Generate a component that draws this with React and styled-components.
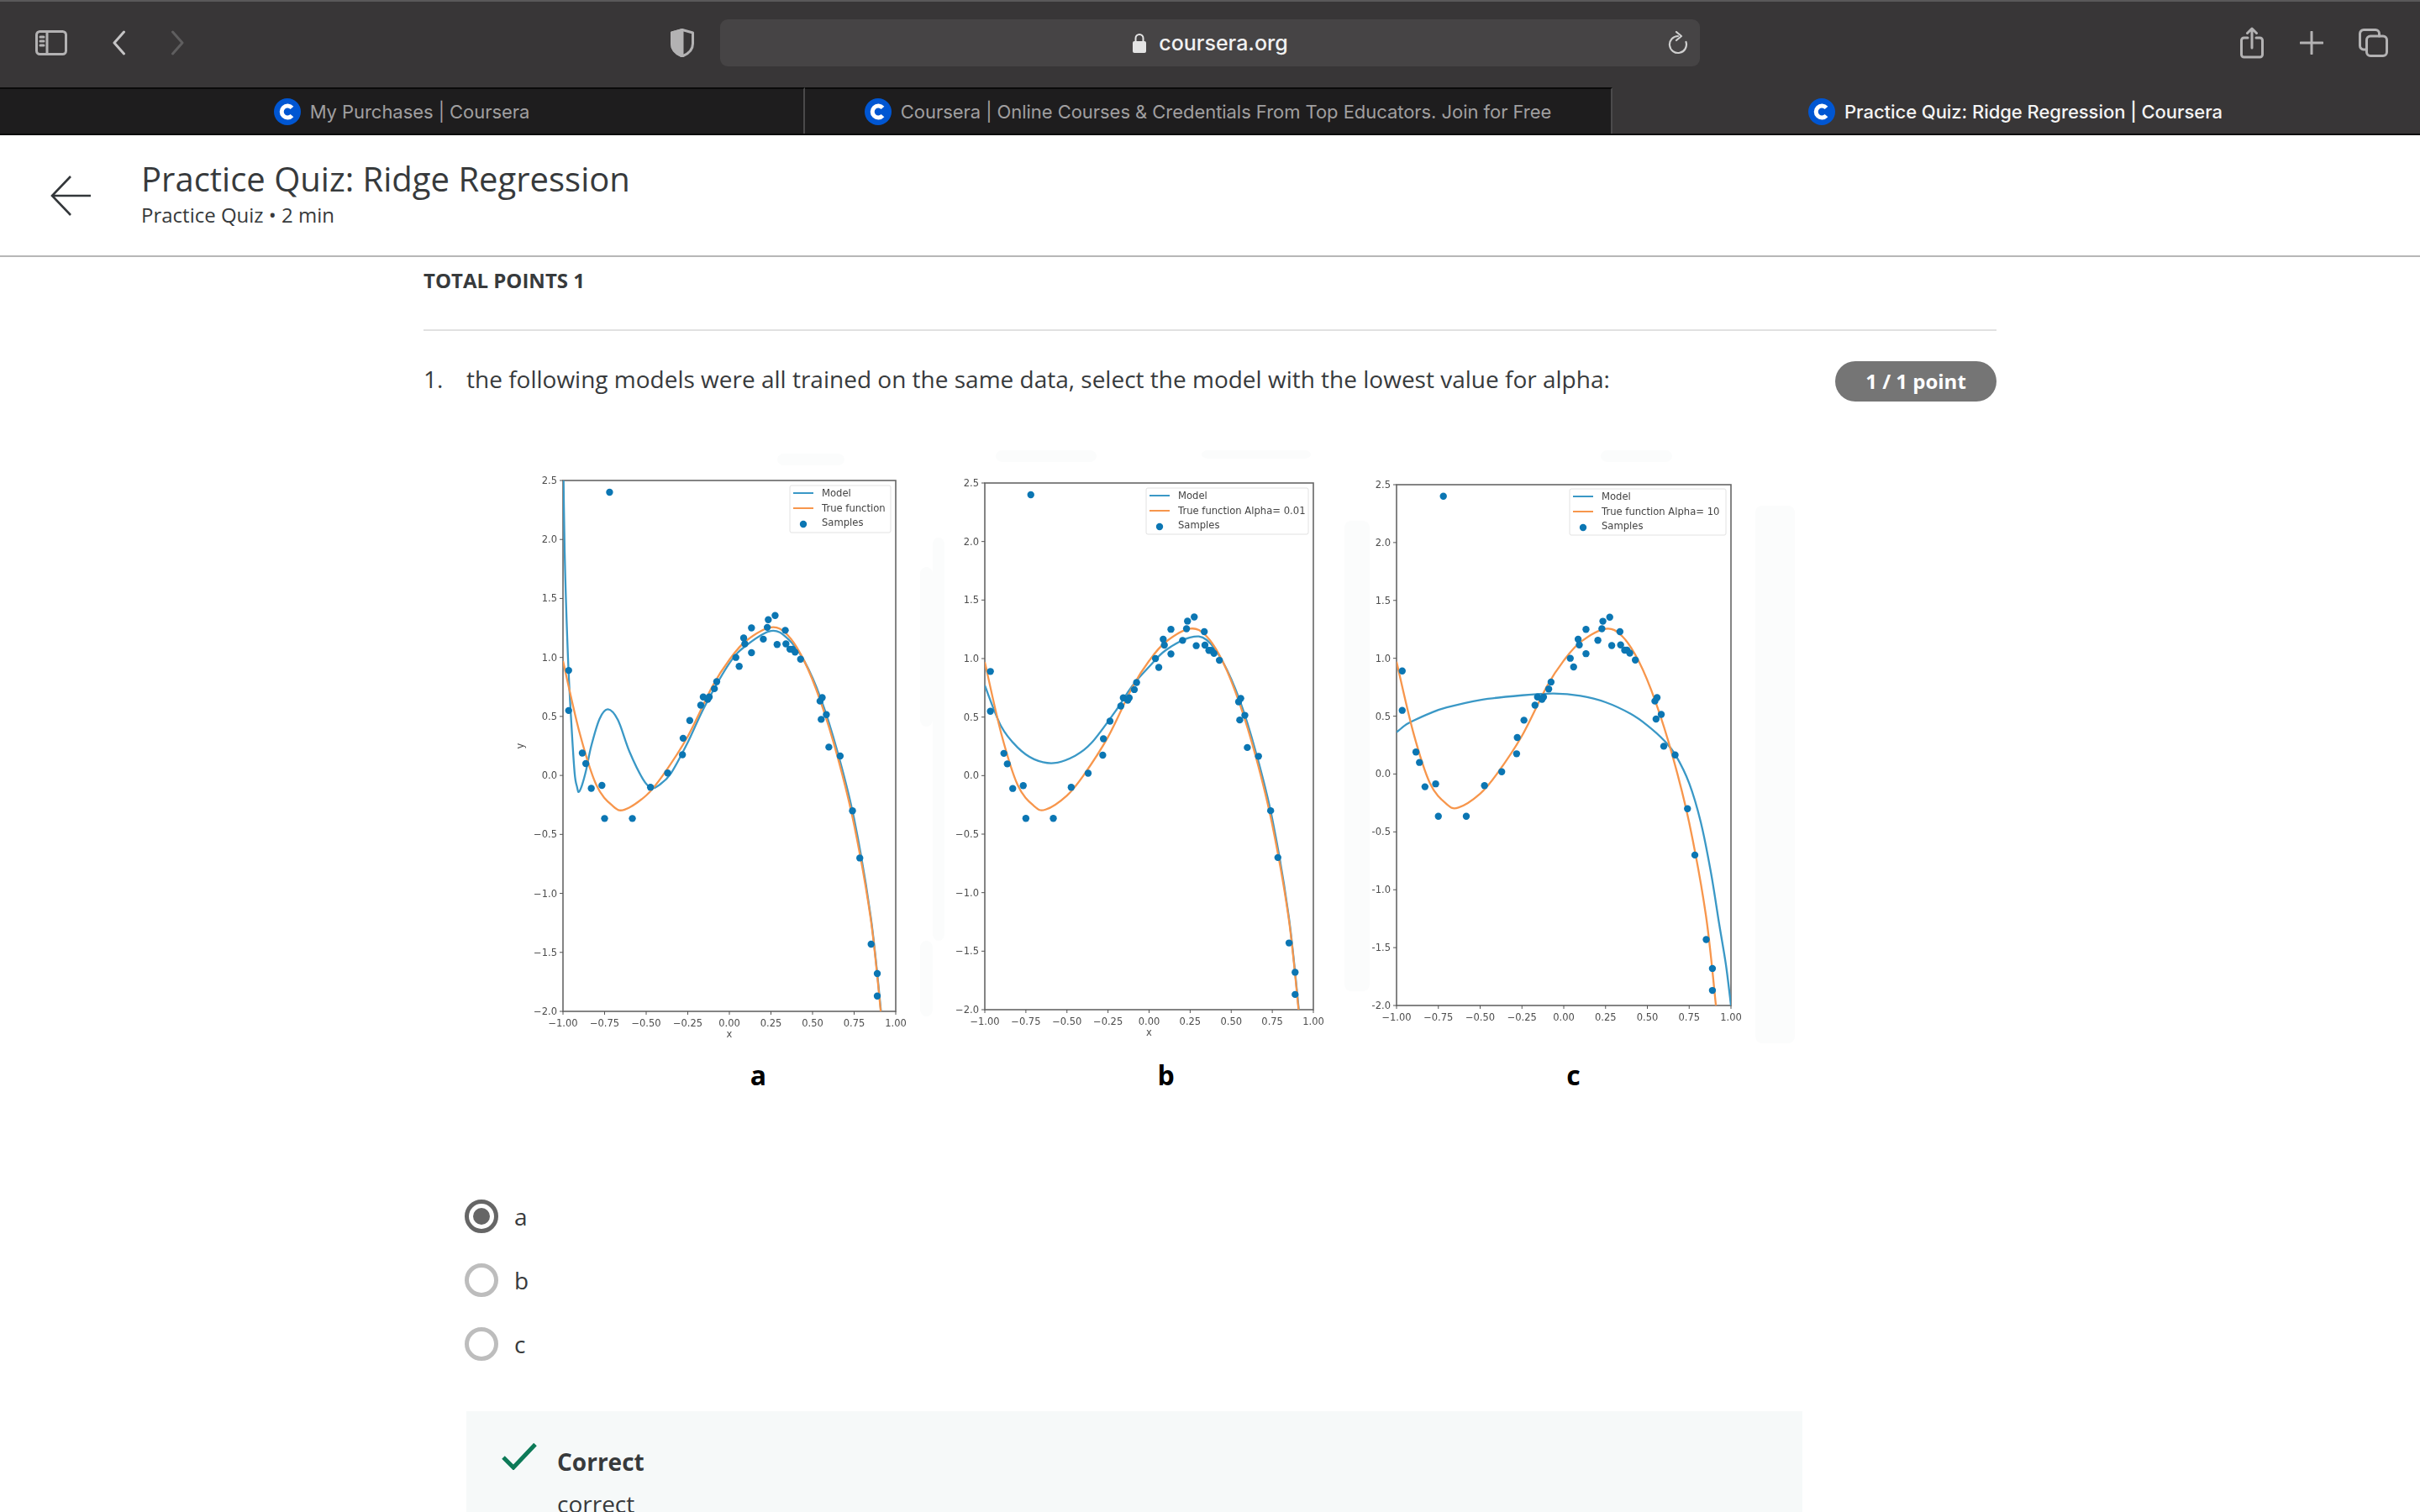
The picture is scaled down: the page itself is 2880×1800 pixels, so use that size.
import React from 'react';
import styled, { createGlobalStyle } from 'styled-components';

const GlobalStyle = createGlobalStyle`
  html, body {
    margin: 0;
    padding: 0;
    background: #fff;
    overflow: hidden;
  }
  #root {
    width: 2880px;
    height: 1800px;
    overflow: hidden;
  }
`;

const Page = styled.div`
  width: 2880px;
  height: 1800px;
  overflow: hidden;
  font-family: 'Open Sans', sans-serif;
  color: #373a3c;
`;

/* browser chrome */
const Toolbar = styled.div`
  height: 104px;
  border-top: 2px solid #5a595a;
  background: #383637;
  display: flex;
  align-items: center;
  padding: 0 38px 4px 42px;
  box-sizing: border-box;
  svg { display: block; flex: none; }
`;

const ToolIcon = styled.svg`
  margin-left: ${(p) => p.$gap || 0}px;
  fill: none;
  stroke: ${(p) => p.$color || '#b3b2b3'};
  stroke-width: 3;
  stroke-linecap: round;
  stroke-linejoin: round;
`;

const AddressBar = styled.div`
  margin-left: 31px;
  width: 1166px;
  height: 56px;
  background: #464445;
  border-radius: 9px;
  display: grid;
  grid-template-columns: 1fr auto 1fr;
  align-items: center;
  padding: 0 14px;
  box-sizing: border-box;
`;

const Url = styled.div`
  grid-column: 2;
  display: flex;
  align-items: center;
  gap: 14px;
  color: #f1f1f1;
  font: 500 25px Inter, sans-serif;
`;

const Reload = styled.svg`
  grid-column: 3;
  justify-self: end;
  fill: none;
  stroke: #cfcfcf;
  stroke-width: 2.2;
  stroke-linecap: round;
  stroke-linejoin: round;
`;

const ToolbarEnd = styled.div`
  margin-left: auto;
  display: flex;
  align-items: center;
`;

const TabStrip = styled.div`
  height: 57px;
  box-sizing: border-box;
  display: grid;
  grid-template-columns: 958px 961px 961px;
  background: #383637;
  border-bottom: 2px solid #0a0a0a;
`;

const Tab = styled.div`
  display: flex;
  align-items: center;
  justify-content: center;
  gap: 11px;
  box-sizing: border-box;
  font: ${(p) => (p.$active ? 500 : 400)} 22px Inter, sans-serif;
  letter-spacing: -0.05px;
  color: ${(p) => (p.$active ? '#f4f4f4' : '#a09fa0')};
  background: ${(p) => (p.$active ? '#383637' : '#1e1d1e')};
  border-top: 2px solid ${(p) => (p.$active ? '#383637' : '#0a0a0a')};
  border-right: 2px solid ${(p) => (p.$active ? 'transparent' : '#4b4a4b')};
`;

/* course header */
const CourseHeader = styled.header`
  height: 145px;
  box-sizing: border-box;
  border-bottom: 2px solid #b7b7b7;
  display: flex;
  align-items: center;
  padding-left: 60px;
`;

const BackArrow = styled.svg`
  flex: none;
  margin-right: 60px;
  fill: none;
  stroke: #33373a;
  stroke-width: 2.6;
`;

const TitleBlock = styled.div`
  display: flex;
  flex-direction: column;
  margin-top: -7px;
`;

const Title = styled.h1`
  margin: 0;
  font-size: 40px;
  line-height: 54px;
  font-weight: 400;
`;

const Subtitle = styled.div`
  font-size: 24px;
  line-height: 32px;
`;

/* quiz body */
const Main = styled.main`
  width: 1872px;
  margin-left: 504px;
`;

const TotalPoints = styled.div`
  height: 88px;
  padding-top: 12px;
  box-sizing: border-box;
  border-bottom: 2px solid #e1e1e1;
  font-size: 24px;
  line-height: 32px;
  font-weight: 700;
`;

const QuestionRow = styled.div`
  margin-top: 36px;
  height: 48px;
  display: flex;
  align-items: center;
  font-size: 28px;
`;

const QuestionText = styled.span`
  padding-bottom: 6px;
`;

const QuestionNumber = styled(QuestionText)`
  width: 51px;
`;

const PointsPill = styled.div`
  margin-left: auto;
  width: 192px;
  height: 48px;
  padding-bottom: 2px;
  box-sizing: border-box;
  border-radius: 24px;
  background: #757575;
  color: #fff;
  font-size: 24px;
  font-weight: 700;
  display: flex;
  align-items: center;
  justify-content: center;
`;

const FigureRow = styled.div`
  margin: 52px 0 3px 86px;
  display: flex;
  align-items: flex-start;
`;

const ChartSvg = styled.svg`
  display: block;
  flex: none;
  filter: blur(0.45px);
`;

const CaptionRow = styled.div`
  margin-left: 156px;
  display: grid;
  grid-template-columns: repeat(3, 485px);
`;

const Caption = styled.div`
  text-align: center;
  font-size: 32px;
  line-height: 44px;
  font-weight: 700;
  color: #000;
`;

const Options = styled.div`
  margin: 126px 0 0 49px;
  display: flex;
  flex-direction: column;
  gap: 36px;
`;

const Option = styled.div`
  height: 40px;
  display: flex;
  align-items: center;
  gap: 19px;
  font-size: 28px;
`;

const Radio = styled.span`
  width: 40px;
  height: 40px;
  box-sizing: border-box;
  border-radius: 50%;
  border: 5px solid ${(p) => (p.$checked ? '#666' : '#bdbdbd')};
  display: flex;
  align-items: center;
  justify-content: center;
  &::after {
    content: '';
    width: 20px;
    height: 20px;
    border-radius: 50%;
    background: ${(p) => (p.$checked ? '#666' : 'transparent')};
  }
`;

const Feedback = styled.div`
  margin: 60px 0 0 51px;
  width: 1590px;
  height: 200px;
  background: #f6f9f9;
  display: flex;
  padding: 38px 0 0 42px;
  box-sizing: border-box;
`;

const FeedbackText = styled.div`
  margin: -3px 0 0 24px;
  font-size: 28px;
  line-height: 50px;
`;

const FeedbackTitle = styled.div`
  font-weight: 700;
`;

const Favicon = () => (
  <svg width="32" height="32" viewBox="0 0 32 32">
    <circle cx="16" cy="16" r="16" fill="#0056d2" />
    <path d="M21.5 11.4a7 7 0 1 0 0 9.2" fill="none" stroke="#fff" strokeWidth="5" />
  </svg>
);

const toPath = (pts) => {
  let d = `M${pts[0][0]} ${pts[0][1]}`;
  for (let i = 0; i < pts.length - 1; i++) {
    const p0 = pts[Math.max(i - 1, 0)];
    const p1 = pts[i];
    const p2 = pts[i + 1];
    const p3 = pts[Math.min(i + 2, pts.length - 1)];
    d += `C${p1[0] + (p2[0] - p0[0]) / 6} ${p1[1] + (p2[1] - p0[1]) / 6} ${p2[0] - (p3[0] - p1[0]) / 6} ${p2[1] - (p3[1] - p1[1]) / 6} ${p2[0]} ${p2[1]}`;
  }
  return d;
};

const samples = [
  [-0.72, 2.4], [-0.966, 0.89], [-0.966, 0.55], [-0.884, 0.19], [-0.863, 0.1], [-0.83, -0.11],
  [-0.766, -0.085], [-0.75, -0.365], [-0.583, -0.365], [-0.474, -0.1], [-0.371, 0.02], [-0.282, 0.175],
  [-0.278, 0.315], [-0.238, 0.465], [-0.172, 0.595], [-0.157, 0.665], [-0.13, 0.645], [-0.121, 0.665],
  [-0.09, 0.735], [-0.076, 0.795], [0.039, 1.0], [0.059, 0.925], [0.086, 1.165], [0.093, 1.115],
  [0.133, 1.25], [0.133, 1.04], [0.204, 1.155], [0.228, 1.255], [0.234, 1.32], [0.275, 1.355],
  [0.287, 1.11], [0.336, 1.23], [0.34, 1.115], [0.364, 1.07], [0.378, 1.07], [0.395, 1.045],
  [0.428, 0.985], [0.545, 0.63], [0.558, 0.66], [0.552, 0.475], [0.583, 0.515], [0.598, 0.24],
  [0.666, 0.165], [0.74, -0.3], [0.784, -0.7], [0.852, -1.43], [0.889, -1.68], [0.889, -1.87],
];

const trueFn = [
  [-1, 0.97], [-0.9, 0.36], [-0.8, -0.08], [-0.7, -0.26], [-0.63, -0.29], [-0.5, -0.17], [-0.4, 0.0],
  [-0.25, 0.33], [-0.1, 0.76], [0, 0.98], [0.1, 1.14], [0.25, 1.255], [0.35, 1.19], [0.45, 0.97],
  [0.55, 0.62], [0.65, 0.16], [0.75, -0.42], [0.85, -1.22], [0.91, -2.0],
];

const tail = [[0.35, 1.16], [0.45, 0.97], [0.55, 0.65], [0.65, 0.2], [0.75, -0.37], [0.85, -1.2], [0.915, -2.05]];

const charts = [
  {
    id: 'a',
    view: [590, 530, 520, 725],
    box: { l: 670, r: 1066, t: 572, b: 1204 },
    legend: { x: 940, y: 578, w: 120, h: 56, text: 'True function' },
    xLabel: true,
    yLabel: true,
    model: [
      [-1, 2.9], [-0.99, 1.9], [-0.97, 1.0], [-0.95, 0.45], [-0.93, 0.02], [-0.915, -0.1], [-0.905, -0.14],
      [-0.885, -0.08], [-0.86, 0.05], [-0.83, 0.25], [-0.78, 0.48], [-0.73, 0.56], [-0.67, 0.47], [-0.6, 0.2],
      [-0.52, -0.03], [-0.47, -0.105], [-0.42, -0.08], [-0.35, 0.02], [-0.25, 0.28], [-0.15, 0.58], [0, 0.95],
      [0.1, 1.1], [0.25, 1.225], ...tail,
    ],
    pale: [[925, 540, 80, 14], [1095, 675, 15, 190], [1095, 1120, 15, 90]],
  },
  {
    id: 'b',
    view: [1110, 530, 490, 725],
    box: { l: 1172, r: 1563, t: 575, b: 1202 },
    legend: { x: 1364, y: 581, w: 193, h: 55, text: 'True function Alpha= 0.01' },
    xLabel: true,
    model: [
      [-1, 0.77], [-0.9, 0.42], [-0.8, 0.24], [-0.7, 0.14], [-0.58, 0.107], [-0.45, 0.17], [-0.35, 0.28],
      [-0.21, 0.54], [-0.1, 0.77], [0, 0.93], [0.1, 1.07], [0.25, 1.18], ...tail,
    ],
    pale: [[1185, 536, 120, 14], [1430, 536, 130, 10], [1110, 640, 14, 480]],
  },
  {
    id: 'c',
    view: [1600, 530, 540, 725],
    box: { l: 1662, r: 2060, t: 577, b: 1197 },
    legend: { x: 1868, y: 582, w: 186, h: 55, text: 'True function Alpha= 10' },
    hyphenY: true,
    model: [
      [-1, 0.36], [-0.95, 0.42], [-0.9, 0.46], [-0.8, 0.525], [-0.7, 0.575], [-0.5, 0.64], [-0.25, 0.68],
      [-0.06, 0.695], [0.1, 0.675], [0.25, 0.62], [0.4, 0.52], [0.5, 0.42], [0.6, 0.29], [0.67, 0.16],
      [0.75, -0.08], [0.82, -0.42], [0.88, -0.85], [0.93, -1.3], [0.97, -1.65], [1, -2],
    ],
    pale: [[1905, 536, 85, 14], [2089, 602, 47, 640], [1600, 620, 30, 560]],
  },
];

const yTicks = [2.5, 2, 1.5, 1, 0.5, 0, -0.5, -1, -1.5, -2];
const xTicks = [-1, -0.75, -0.5, -0.25, 0, 0.25, 0.5, 0.75, 1];
const axisText = { fontFamily: 'DejaVu Sans, sans-serif', fontSize: 11.5, fill: '#4d4d4d' };
const legendText = { fontFamily: 'DejaVu Sans, sans-serif', fontSize: 11.6, fill: '#444' };

const Chart = ({ id, view, box, legend, xLabel, yLabel, hyphenY, model, pale }) => {
  const sx = (v) => box.l + ((v + 1) / 2) * (box.r - box.l);
  const sy = (v) => box.t + ((2.5 - v) / 4.5) * (box.b - box.t);
  const line = (pts) => toPath(pts.map(([x, y]) => [sx(x), sy(y)]));
  const fmtY = (v) => {
    const s = Math.abs(v).toFixed(1);
    if (v >= 0) return s;
    return (hyphenY ? '-' : '\u2212') + s;
  };
  const fmtX = (v) => (v < 0 ? '\u2212' : '') + Math.abs(v).toFixed(2);
  const [vx, vy, vw, vh] = view;

  return (
    <ChartSvg width={vw} height={vh} viewBox={`${vx} ${vy} ${vw} ${vh}`}>
      <defs>
        <clipPath id={`plot-${id}`}>
          <rect x={box.l} y={box.t} width={box.r - box.l} height={box.b - box.t} />
        </clipPath>
      </defs>
      {pale.map(([x, y, w, h]) => (
        <rect key={`${x}-${y}`} x={x} y={y} width={w} height={h} rx="8" fill="#fbfcfc" />
      ))}
      <rect x={box.l} y={box.t} width={box.r - box.l} height={box.b - box.t} fill="#fff" stroke="#666" strokeWidth="1.6" />
      {yTicks.map((v) => (
        <g key={v}>
          <line x1={box.l - 4} x2={box.l} y1={sy(v)} y2={sy(v)} stroke="#555" strokeWidth="1" />
          <text {...axisText} x={box.l - 7} y={sy(v) + 4} textAnchor="end">{fmtY(v)}</text>
        </g>
      ))}
      {xTicks.map((v) => (
        <g key={v}>
          <line x1={sx(v)} x2={sx(v)} y1={box.b} y2={box.b + 4} stroke="#555" strokeWidth="1" />
          <text {...axisText} x={sx(v)} y={box.b + 18} textAnchor="middle">{fmtX(v)}</text>
        </g>
      ))}
      {xLabel && <text {...axisText} x={(box.l + box.r) / 2} y={box.b + 31} textAnchor="middle">x</text>}
      {yLabel && (
        <text {...axisText} textAnchor="middle" transform={`translate(${box.l - 47} ${(box.t + box.b) / 2}) rotate(-90)`}>y</text>
      )}
      <g clipPath={`url(#plot-${id})`} fill="none" strokeWidth="2.3">
        <path d={line(model)} stroke="#3a98c6" />
        <path d={line(trueFn)} stroke="#f7964c" />
      </g>
      {samples.map(([x, y]) => (
        <circle key={`${x}${y}`} cx={sx(x)} cy={sy(y)} r="4.2" fill="#0b76b3" />
      ))}
      <rect x={legend.x} y={legend.y} width={legend.w} height={legend.h} rx="2" fill="#fff" stroke="#e2e2e2" />
      <line x1={legend.x + 4} x2={legend.x + 28} y1={legend.y + 9} y2={legend.y + 9} stroke="#3a98c6" strokeWidth="2" />
      <line x1={legend.x + 4} x2={legend.x + 28} y1={legend.y + 27} y2={legend.y + 27} stroke="#f7964c" strokeWidth="2" />
      <circle cx={legend.x + 16} cy={legend.y + 46} r="4.2" fill="#0b76b3" />
      <text {...legendText} x={legend.x + 38} y={legend.y + 13}>Model</text>
      <text {...legendText} x={legend.x + 38} y={legend.y + 31}>{legend.text}</text>
      <text {...legendText} x={legend.x + 38} y={legend.y + 48}>Samples</text>
    </ChartSvg>
  );
};

const App = () => (
  <Page>
    <GlobalStyle />
    <Toolbar>
      <ToolIcon width="38" height="30" viewBox="0 0 38 30" strokeWidth="2.5">
        <rect x="1.5" y="1.5" width="35" height="27" rx="4" />
        <path d="M14 1.5v27M6 8h4M6 13h4M6 18h4" />
      </ToolIcon>
      <ToolIcon $gap={53} width="17" height="30" viewBox="0 0 17 30" $color="#c5c4c5">
        <path d="M14.5 2 3 15l11.5 13" />
      </ToolIcon>
      <ToolIcon $gap={53} width="17" height="30" viewBox="0 0 17 30" $color="#5f5e5f">
        <path d="M2.500 2 14 15 2.500 28" />
      </ToolIcon>
      <ToolIcon $gap={578} width="28" height="34" viewBox="0 0 28 34" strokeWidth="2">
        <path d="M14 1.500 26.500 5v13c0 7-5 12-12.500 15C6.500 30 1.500 25 1.500 18V5z" />
        <path d="M14 1.500 1.500 5v13c0 7 5 12 12.500 15z" fill="#b3b2b3" />
      </ToolIcon>
      <AddressBar>
        <Url>
          <svg width="18" height="24" viewBox="0 0 18 24">
            <rect x="1" y="10" width="16" height="14" rx="2" fill="#e4e4e4" />
            <path d="M4.500 11V6.500a4.500 4.500 0 0 1 9 0V11" fill="none" stroke="#e4e4e4" strokeWidth="2" />
          </svg>
          coursera.org
        </Url>
        <Reload width="24" height="28" viewBox="0 0 24 28">
          <path d="M12 6a10 10 0 1 0 9.500 7" />
          <path d="M10 1l6 5-6 5" />
        </Reload>
      </AddressBar>
      <ToolbarEnd>
        <ToolIcon width="28" height="38" viewBox="0 0 28 38" strokeWidth="2.4">
          <path d="M9 13H4.500a3 3 0 0 0-3 3v17a3 3 0 0 0 3 3h19a3 3 0 0 0 3-3V16a3 3 0 0 0-3-3H19" />
          <path d="M14 25V2M8.500 7.500 14 2l5.500 5.500" />
        </ToolIcon>
        <ToolIcon $gap={43} width="28" height="28" viewBox="0 0 28 28">
          <path d="M14 1v26M1 14h26" />
        </ToolIcon>
        <ToolIcon $gap={42} width="35" height="34" viewBox="0 0 35 34" strokeWidth="2.4">
          <path d="M9 25H6a4.500 4.500 0 0 1-4.500-4.500V6A4.500 4.500 0 0 1 6 1.500h14A4.500 4.500 0 0 1 24.500 6v3" />
          <rect x="9.500" y="9" width="24" height="23.500" rx="4.500" />
        </ToolIcon>
      </ToolbarEnd>
    </Toolbar>
    <TabStrip>
      <Tab>
        <Favicon />
        My Purchases | Coursera
      </Tab>
      <Tab>
        <Favicon />
        Coursera | Online Courses &amp; Credentials From Top Educators. Join for Free
      </Tab>
      <Tab $active>
        <Favicon />
        Practice Quiz: Ridge Regression | Coursera
      </Tab>
    </TabStrip>
    <CourseHeader>
      <BackArrow width="48" height="48" viewBox="0 0 48 48">
        <path d="M24 1 2 24l22 23M2 24h46" />
      </BackArrow>
      <TitleBlock>
        <Title>Practice Quiz: Ridge Regression</Title>
        <Subtitle>Practice Quiz • 2 min</Subtitle>
      </TitleBlock>
    </CourseHeader>
    <Main>
      <TotalPoints>TOTAL POINTS 1</TotalPoints>
      <QuestionRow>
        <QuestionNumber>1.</QuestionNumber>
        <QuestionText>
          the following models were all trained on the same data, select the model with the lowest value for alpha:
        </QuestionText>
        <PointsPill>1 / 1 point</PointsPill>
      </QuestionRow>
      <FigureRow>
        {charts.map((c) => (
          <Chart key={c.id} {...c} />
        ))}
      </FigureRow>
      <CaptionRow>
        <Caption>a</Caption>
        <Caption>b</Caption>
        <Caption>c</Caption>
      </CaptionRow>
      <Options>
        <Option><Radio $checked />a</Option>
        <Option><Radio />b</Option>
        <Option><Radio />c</Option>
      </Options>
      <Feedback>
        <svg width="42" height="32" viewBox="0 0 42 32" fill="none" stroke="#0d7a58" strokeWidth="5">
          <path d="M2 17 14 29 40 1.500" />
        </svg>
        <FeedbackText>
          <FeedbackTitle>Correct</FeedbackTitle>
          correct
        </FeedbackText>
      </Feedback>
    </Main>
  </Page>
);

export default App;
